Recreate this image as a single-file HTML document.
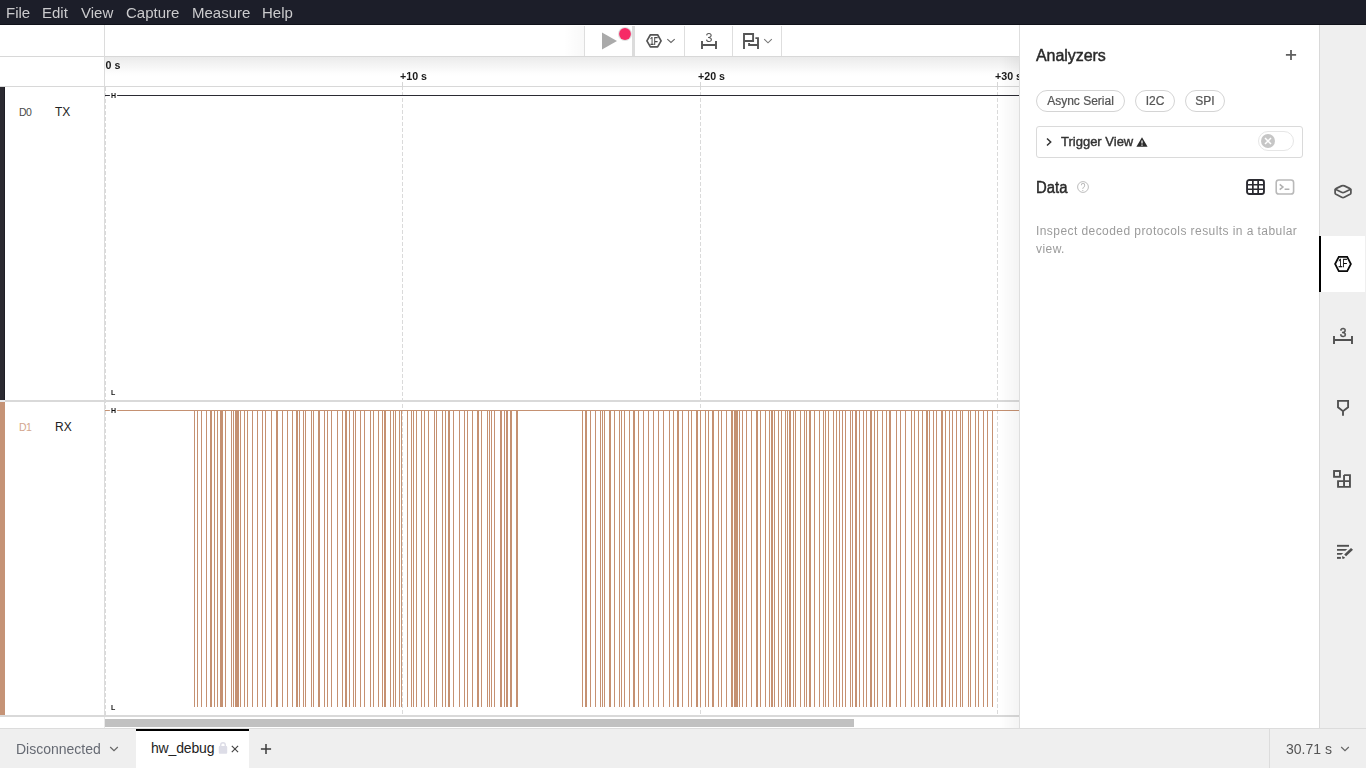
<!DOCTYPE html>
<html lang="en">
<head>
<meta charset="utf-8">
<title>Logic 2 - hw_debug</title>
<style>
*{box-sizing:border-box;margin:0;padding:0}
html,body{width:1366px;height:768px;overflow:hidden;background:#fff}
body{font-family:"Liberation Sans",sans-serif;color:#2b2b2b;position:relative}
.abs{position:absolute}
svg{display:block;overflow:visible}
.gs{will-change:transform}
/* menubar */
#menubar{left:0;top:0;width:1366px;height:25px;background:#1c1e29;border-bottom:1px solid #10121a;color:#cbcbcd;font-size:15px;line-height:25px;white-space:nowrap}
#menubar span{position:absolute;top:0}
/* toolbar */
#tb{left:584px;top:26px;width:198px;height:30px;background:#fff}
.vsep{position:absolute;top:0;width:1px;height:30px;background:#dedede}
/* time bar */
#timebar{left:105px;top:57px;width:914px;height:29px;background:linear-gradient(#ebebeb 0,#f4f4f4 8px,#fdfdfd 16px,#fff 20px);overflow:hidden}
.tl{position:absolute;font-weight:bold;font-size:10.67px;line-height:11px;color:#1a1a1a;white-space:nowrap}
.hline{position:absolute;height:1px;background:#dcdcdc}
.vline{position:absolute;width:1px;background:#dcdcdc}
.dash{position:absolute;width:1px;background:repeating-linear-gradient(#dadada 0,#dadada 4px,transparent 4px,transparent 6px)}
.hl{will-change:transform;position:absolute;font-weight:bold;font-size:7px;line-height:7px;color:#111;text-shadow:0 0 2px #fff,0 0 2px #fff,0 0 3px #fff}
.chn{position:absolute;font-size:12px;line-height:14px;color:#222}
.chd{position:absolute;font-size:10.5px;line-height:14px;letter-spacing:-.6px}
/* right panel */
#panel{left:1020px;top:25px;width:299px;height:703px;background:#fff}
.h1{position:absolute;font-size:16px;line-height:20px;color:#2a2a2a;white-space:nowrap;-webkit-text-stroke:.45px #2a2a2a}
.chip{position:absolute;top:65px;height:22px;border:1px solid #d4d4d4;border-radius:11px;font-size:12px;line-height:20px;color:#555;text-align:center;white-space:nowrap;-webkit-text-stroke:.22px #555}
#sidebar{left:1319px;top:25px;width:47px;height:703px;background:#efefef;border-left:1px solid #d9d9d9}
#bottom{left:0;top:728px;width:1366px;height:40px;background:#efefef;border-top:1px solid #dcdcdc}
</style>
</head>
<body>

<!-- ===== menubar ===== -->
<div id="menubar" class="abs gs">
<span style="left:6px">File</span><span style="left:42px">Edit</span><span style="left:81px">View</span><span style="left:126px">Capture</span><span style="left:192px">Measure</span><span style="left:262px">Help</span>
</div>

<!-- ===== header borders ===== -->
<div class="hline" style="left:0;top:56px;width:1019px;background:#d8d8d8"></div>
<div class="vline" style="left:104px;top:25px;height:692px"></div>
<div class="hline" style="left:0;top:86px;width:1019px;background:#d8d8d8"></div>

<!-- ===== time bar ===== -->
<div id="timebar" class="abs gs">
  <div class="tl" style="left:.5px;top:3px">0 s</div>
  <div class="tl" style="left:295px;top:14px">+10 s</div>
  <div class="tl" style="left:593px;top:14px">+20 s</div>
  <div class="tl" style="left:890px;top:14px">+30 s</div>
</div>

<!-- ===== toolbar ===== -->
<div class="abs" style="left:564px;top:26px;width:20px;height:30px;background:linear-gradient(90deg,rgba(0,0,0,0),rgba(0,0,0,.028))"></div>
<div id="tb" class="abs gs">
  <div class="vsep" style="left:0"></div>
  <div class="vsep" style="left:48px;width:3px;background:#dcdcdc"></div>
  <div class="vsep" style="left:100px"></div>
  <div class="vsep" style="left:148px"></div>
  <div class="vsep" style="left:197px"></div>
  <svg class="abs" style="left:0;top:0" width="198" height="30" viewBox="0 0 198 30">
    <!-- play -->
    <path d="M18 6.5 L33 15 L18 23.5z" fill="#aaaaaa"/>
    <circle cx="41" cy="8" r="7" fill="#e0e0e0"/>
    <circle cx="41" cy="8" r="5.9" fill="#f62a66"/>
    <!-- analyzer hex -->
    <path d="M62.9 14.85 L66.4 8.8 H73.6 L77.1 14.85 L73.6 20.9 H66.4z" fill="none" stroke="#555" stroke-width="1.7" stroke-linejoin="round"/>
    <text transform="translate(69.9 18.8) scale(.62 1)" font-size="11" font-weight="bold" text-anchor="middle" fill="#484848" font-family="Liberation Sans, sans-serif">1F</text>
    <path d="M83.3 13.1 L87 16.5 L90.7 13.1" fill="none" stroke="#666" stroke-width="1.1"/>
    <!-- measure -->
    <text x="125" y="15.9" font-size="12.5" text-anchor="middle" fill="#555" font-family="Liberation Sans, sans-serif">3</text>
    <path d="M118 15 V23 M132 15 V23 M118 19 H132" fill="none" stroke="#555" stroke-width="1.9"/>
    <!-- flags -->
    <path d="M160 22.9 V8 H169.1 V15 H160" fill="none" stroke="#555" stroke-width="1.9"/>
    <path d="M171.4 12.1 H174 V22.9 M174 19 H165.1 V17" fill="none" stroke="#555" stroke-width="1.9"/>
    <path d="M180.2 13.2 L184 16.8 L187.8 13.2" fill="none" stroke="#777" stroke-width="1.1"/>
  </svg>
</div>

<!-- ===== channel rows ===== -->
<div class="abs" style="left:0;top:87px;width:5px;height:313px;background:linear-gradient(90deg,#2b2a31 0,#2b2a31 4px,#1f1e25 4px)"></div>
<div class="abs" style="left:0;top:402px;width:5px;height:313px;background:#c59376"></div>
<div class="hline" style="left:0;top:400px;width:1019px;height:2px;background:#d9d9d9"></div><div class="hline" style="left:0;top:400px;width:5px;height:2px;background:#e8eaec"></div>
<div class="hline" style="left:0;top:715px;width:1019px;height:2px;background:#d9d9d9"></div>
<div class="vline" style="left:104px;top:717px;height:11px;background:#e9e9e9"></div>

<div class="chd" style="left:19px;top:105px;color:#4a4a4a">D0</div>
<div class="chn" style="left:55px;top:105px">TX</div>
<div class="chd" style="left:19px;top:420px;color:#d3a68e">D1</div>
<div class="chn" style="left:55px;top:420px">RX</div>

<!-- dashed grid -->
<div class="dash" style="left:105px;top:87px;height:628px"></div>
<div class="dash" style="left:402px;top:86px;height:629px"></div><div class="vline" style="left:402px;top:82px;height:5px;background:#d6d6d6"></div>
<div class="dash" style="left:700px;top:86px;height:629px"></div><div class="vline" style="left:700px;top:82px;height:5px;background:#d6d6d6"></div>
<div class="dash" style="left:997px;top:86px;height:629px"></div><div class="vline" style="left:997px;top:82px;height:5px;background:#d6d6d6"></div>

<!-- D0 waveform -->
<div class="abs" style="left:105px;top:95px;width:914px;height:1px;background:#2b2b33;box-shadow:0 0 .5px #2b2b33"></div>
<div class="abs" style="left:110px;top:91px;width:7px;height:8px;background:#fff;border-radius:3px"></div>
<div class="hl" style="left:111px;top:92px">H</div>
<div class="hl" style="left:111px;top:389px">L</div>

<!-- D1 waveform -->
<svg class="abs" style="left:105px;top:402px" width="914" height="312" viewBox="0 0 914 312" shape-rendering="crispEdges">
  <rect x="0" y="8" width="914" height="1" fill="#c59172"/>
  <path d="M89 8h1v297h-1zM92 8h1v297h-1zM96 8h1v297h-1zM101 8h1v297h-1zM105 8h2v297h-2zM109 8h1v297h-1zM112 8h1v297h-1zM115 8h3v297h-3zM120 8h1v297h-1zM126 8h1v297h-1zM128 8h1v297h-1zM130 8h4v297h-4zM135 8h1v297h-1zM139 8h1v297h-1zM142 8h1v297h-1zM147 8h1v297h-1zM152 8h1v297h-1zM157 8h1v297h-1zM160 8h1v297h-1zM166 8h1v297h-1zM171 8h2v297h-2zM177 8h1v297h-1zM182 8h1v297h-1zM187 8h1v297h-1zM191 8h2v297h-2zM194 8h1v297h-1zM198 8h1v297h-1zM200 8h1v297h-1zM206 8h1v297h-1zM208 8h1v297h-1zM213 8h2v297h-2zM219 8h1v297h-1zM222 8h1v297h-1zM226 8h1v297h-1zM232 8h1v297h-1zM237 8h1v297h-1zM240 8h2v297h-2zM244 8h1v297h-1zM248 8h1v297h-1zM250 8h1v297h-1zM255 8h1v297h-1zM259 8h1v297h-1zM265 8h1v297h-1zM268 8h1v297h-1zM273 8h1v297h-1zM277 8h1v297h-1zM279 8h2v297h-2zM285 8h1v297h-1zM288 8h1v297h-1zM290 8h1v297h-1zM294 8h1v297h-1zM296 8h1v297h-1zM302 8h1v297h-1zM306 8h1v297h-1zM308 8h1v297h-1zM311 8h1v297h-1zM316 8h1v297h-1zM319 8h1v297h-1zM323 8h1v297h-1zM329 8h1v297h-1zM331 8h1v297h-1zM337 8h1v297h-1zM340 8h1v297h-1zM343 8h2v297h-2zM348 8h1v297h-1zM354 8h1v297h-1zM359 8h1v297h-1zM362 8h1v297h-1zM367 8h1v297h-1zM372 8h2v297h-2zM376 8h1v297h-1zM382 8h1v297h-1zM384 8h1v297h-1zM386 8h1v297h-1zM389 8h1v297h-1zM395 8h2v297h-2zM399 8h1v297h-1zM401 8h2v297h-2zM405 8h2v297h-2zM411 8h2v297h-2zM477 8h1v297h-1zM480 8h2v297h-2zM485 8h1v297h-1zM490 8h1v297h-1zM495 8h1v297h-1zM497 8h1v297h-1zM499 8h1v297h-1zM504 8h2v297h-2zM509 8h1v297h-1zM514 8h1v297h-1zM516 8h1v297h-1zM519 8h1v297h-1zM524 8h1v297h-1zM528 8h2v297h-2zM533 8h1v297h-1zM538 8h1v297h-1zM543 8h1v297h-1zM548 8h1v297h-1zM553 8h1v297h-1zM558 8h1v297h-1zM564 8h1v297h-1zM568 8h1v297h-1zM572 8h2v297h-2zM577 8h1v297h-1zM583 8h1v297h-1zM586 8h1v297h-1zM591 8h2v297h-2zM595 8h1v297h-1zM600 8h1v297h-1zM603 8h1v297h-1zM607 8h2v297h-2zM613 8h1v297h-1zM616 8h1v297h-1zM621 8h1v297h-1zM626 8h2v297h-2zM629 8h4v297h-4zM634 8h1v297h-1zM637 8h1v297h-1zM641 8h1v297h-1zM646 8h1v297h-1zM651 8h2v297h-2zM655 8h1v297h-1zM660 8h1v297h-1zM664 8h1v297h-1zM666 8h2v297h-2zM669 8h1v297h-1zM673 8h1v297h-1zM676 8h1v297h-1zM680 8h1v297h-1zM682 8h1v297h-1zM684 8h2v297h-2zM688 8h1v297h-1zM690 8h1v297h-1zM695 8h1v297h-1zM699 8h1v297h-1zM701 8h1v297h-1zM704 8h2v297h-2zM709 8h1v297h-1zM714 8h1v297h-1zM718 8h1v297h-1zM720 8h1v297h-1zM723 8h1v297h-1zM728 8h1v297h-1zM731 8h1v297h-1zM734 8h1v297h-1zM737 8h1v297h-1zM740 8h1v297h-1zM745 8h1v297h-1zM747 8h1v297h-1zM750 8h2v297h-2zM754 8h1v297h-1zM758 8h1v297h-1zM761 8h1v297h-1zM765 8h2v297h-2zM769 8h1v297h-1zM772 8h1v297h-1zM777 8h1v297h-1zM781 8h1v297h-1zM784 8h2v297h-2zM791 8h1v297h-1zM795 8h1v297h-1zM800 8h1v297h-1zM806 8h1v297h-1zM809 8h1v297h-1zM813 8h1v297h-1zM817 8h1v297h-1zM821 8h2v297h-2zM824 8h1v297h-1zM828 8h1v297h-1zM831 8h1v297h-1zM836 8h2v297h-2zM840 8h1v297h-1zM844 8h1v297h-1zM847 8h1v297h-1zM851 8h1v297h-1zM855 8h1v297h-1zM857 8h1v297h-1zM863 8h1v297h-1zM865 8h1v297h-1zM870 8h1v297h-1zM873 8h1v297h-1zM878 8h1v297h-1zM882 8h1v297h-1zM887 8h1v297h-1z" fill="#c59172"/>
</svg>
<div class="abs" style="left:110px;top:406px;width:7px;height:8px;background:#fff;border-radius:3px"></div>
<div class="hl" style="left:111px;top:407px">H</div>
<div class="hl" style="left:111px;top:704px">L</div>

<!-- scrollbar -->
<div class="abs" style="left:105px;top:719px;width:749px;height:8px;background:#c1c1c1"></div>

<!-- shadow of right panel -->
<div class="abs" style="left:999px;top:57px;width:20px;height:671px;background:linear-gradient(90deg,rgba(0,0,0,0),rgba(0,0,0,.042))"></div>
<div class="vline" style="left:1019px;top:25px;height:703px;background:#dedede"></div>

<!-- ===== right panel ===== -->
<div id="panel" class="abs gs">
  <div class="h1" style="left:16px;top:21px;letter-spacing:-.05px">Analyzers</div>
  <svg class="abs" style="left:265px;top:24px" width="12" height="12" viewBox="0 0 12 12"><path d="M6 1V10.9M.9 5.95H11.1" stroke="#606060" stroke-width="1.8" fill="none"/></svg>

  <div class="chip" style="left:16px;width:89px">Async Serial</div>
  <div class="chip" style="left:115px;width:40px">I2C</div>
  <div class="chip" style="left:165px;width:40px">SPI</div>

  <div class="abs" style="left:16px;top:101px;width:267px;height:32px;border:1px solid #dadada;border-radius:3px"></div>
  <svg class="abs" style="left:24px;top:112px" width="10" height="10" viewBox="0 0 10 10"><path d="M3 1.5 L6.7 5 L3 8.5" stroke="#333" stroke-width="1.5" fill="none"/></svg>
  <div class="abs" style="left:41px;top:109px;font-size:13px;line-height:16px;color:#333;white-space:nowrap;-webkit-text-stroke:.4px #333">Trigger View</div>
  <svg class="abs" style="left:116px;top:112px" width="12" height="10" viewBox="0 0 12 10"><path d="M6 .3 L11.6 9.7 H.4z" fill="#2b2b2b"/><path d="M6 3.4V6.6M6 7.5V8.7" stroke="#fff" stroke-width="1.2"/></svg>
  <div class="abs" style="left:238px;top:106px;width:36px;height:20px;border:1px solid #e6e6e6;border-radius:10px;background:#fff"></div>
  <svg class="abs" style="left:241px;top:109px" width="14" height="14" viewBox="0 0 14 14"><circle cx="7" cy="7" r="7" fill="#c6c6c6"/><path d="M4 4L10 10M10 4L4 10" stroke="#fff" stroke-width="1.5"/></svg>

  <div class="h1" style="left:16px;top:153px;transform:scaleX(.93);transform-origin:0 0">Data</div>
  <svg class="abs" style="left:57px;top:156px" width="12" height="12" viewBox="0 0 12 12"><circle cx="6" cy="6" r="5.4" fill="none" stroke="#bdbdbd" stroke-width="1"/><text transform="translate(6 9.7) scale(.85 1)" font-size="10.5" text-anchor="middle" fill="#b2b2b2" font-family="Liberation Sans, sans-serif">?</text></svg>
  <!-- table icon -->
  <svg class="abs" style="left:226px;top:154px" width="19" height="16" viewBox="0 0 19 16"><rect x="1.05" y="1" width="16.9" height="14" rx="2.2" fill="none" stroke="#2b2b31" stroke-width="1.9"/><path d="M1 5.75H18M1 10.25H18M6.85 1V15M12.15 1V15" stroke="#2b2b31" stroke-width="1.7"/></svg>
  <!-- terminal icon -->
  <svg class="abs" style="left:255px;top:154px" width="20" height="16" viewBox="0 0 20 16"><rect x="1.2" y="1" width="17.4" height="14" rx="2.6" fill="none" stroke="#b9b9b9" stroke-width="1.6"/><path d="M4.7 5.3L7.9 8L4.7 10.7M9.6 10.3H14.4" stroke="#b0b0b0" stroke-width="1.6" fill="none"/></svg>

  <div class="abs" style="left:16px;top:197px;width:281px;font-size:12px;line-height:18px;color:#9b9b9b;letter-spacing:.43px">Inspect decoded protocols results in a tabular view.</div>
</div>

<!-- ===== sidebar ===== -->
<div id="sidebar" class="abs gs">
  <div class="abs" style="left:-1px;top:211px;width:46px;height:56px;background:#fff;border-left:2px solid #000"></div>
  <svg class="abs" style="left:0;top:0" width="46" height="703" viewBox="0 0 46 703">
    <!-- device -->
    <g fill="none" stroke="#555" stroke-width="1.75" stroke-linejoin="round" stroke-linecap="round">
      <path d="M21.6 160.9 Q23 160.2 24.4 160.9 L29.6 163.4 Q31 164.1 29.6 164.8 L24.4 167.2 Q23 167.9 21.6 167.2 L16.4 164.8 Q15 164.1 16.4 163.4 Z"/>
      <path d="M15.1 164.3 V168 Q15.1 168.8 16 169.3 L21.7 172.2 Q23 172.9 24.3 172.2 L30 169.3 Q30.9 168.8 30.9 168 V164.3"/>
    </g>
    <!-- analyzers hex -->
    <path d="M15.1 239 L18.8 231.9 H27.2 L30.9 239 L27.2 246.1 H18.8z" fill="none" stroke="#0a0a0a" stroke-width="1.75" stroke-linejoin="miter"/>
    <text transform="translate(22.8 242) scale(.76 1)" font-size="10" text-anchor="middle" fill="#0a0a0a" stroke="#0a0a0a" stroke-width=".35" font-family="Liberation Sans, sans-serif">1F</text>
    <!-- measure -->
    <text x="23" y="311.7" font-size="12" text-anchor="middle" fill="#505050" stroke="#505050" stroke-width=".45" font-family="Liberation Sans, sans-serif">3</text>
    <path d="M14 311V319M32 311V319M14 315H32" fill="none" stroke="#505050" stroke-width="1.9"/>
    <!-- marker -->
    <path d="M18 375.9H28.1V382.3L23 386.2L18 382.3zM23 386.2V390.8" fill="none" stroke="#505050" stroke-width="1.85"/>
    <!-- extensions -->
    <g fill="none" stroke="#505050" stroke-width="1.9">
      <rect x="14.05" y="446" width="5.9" height="5.8"/>
      <path d="M24.05 450.1H29.95V461.85H18.05V456.15H29.95M24.05 450.1V461.85"/>
    </g>
    <!-- notes -->
    <g fill="#505050">
      <path d="M17 519.85H29V521.75H17z"/>
      <path d="M17 523.9H27.3L25.4 525.8H17z"/>
      <path d="M17 527.9H23.2L21.3 529.75H17z"/>
      <path d="M17 531.9H20.9V533.85H17z"/>
      <path d="M31 523L33 524.8L26.1 531.3L24.2 529.55z"/>
      <path d="M22.2 531.1L25.1 532.5L24 533.85H22.2z"/>
    </g>
  </svg>
</div>

<!-- ===== bottom bar ===== -->
<div id="bottom" class="abs">
  <div class="abs gs" style="left:16px;top:11px;font-size:14px;line-height:18px;color:#666a73;white-space:nowrap">Disconnected</div>
  <svg class="abs" style="left:109px;top:17px" width="10" height="6" viewBox="0 0 10 6"><path d="M1.2 1L5 4.6L8.8 1" fill="none" stroke="#666" stroke-width="1.2"/></svg>
  <div class="abs" style="left:136px;top:0;width:113px;height:39px;background:#fff;border-top:2px solid #000"></div>
  <div class="abs" style="left:151px;top:10px;font-size:14px;line-height:18px;color:#222;white-space:nowrap;letter-spacing:-.17px">hw_debug</div>
  <svg class="abs" style="left:218px;top:13px" width="10" height="12" viewBox="0 0 10 12"><rect x=".8" y="3.9" width="8.4" height="7.9" rx="1" fill="#dddde7"/><path d="M2.7 4.5V3a2.3 2.3 0 0 1 4.6 0V4.5" fill="none" stroke="#dddde7" stroke-width="1.4"/></svg>
  <svg class="abs" style="left:231px;top:16px" width="8" height="8" viewBox="0 0 8 8"><path d="M.8 .9L7.1 7.2M7.1 .9L.8 7.2" stroke="#444" stroke-width="1.15" fill="none"/></svg>
  <svg class="abs" style="left:260px;top:14px" width="12" height="12" viewBox="0 0 12 12"><path d="M6 .9V11.1M.9 6H11.1" stroke="#3c3c3c" stroke-width="1.5" fill="none"/></svg>
  <div class="abs" style="left:1269px;top:0;width:1px;height:39px;background:#dcdcdc"></div>
  <div class="abs gs" style="left:1286px;top:11px;font-size:14px;line-height:18px;color:#555;white-space:nowrap">30.71 s</div>
  <svg class="abs" style="left:1340px;top:17px" width="10" height="6" viewBox="0 0 10 6"><path d="M1.2 1L5 4.6L8.8 1" fill="none" stroke="#666" stroke-width="1.2"/></svg>
</div>

</body>
</html>
